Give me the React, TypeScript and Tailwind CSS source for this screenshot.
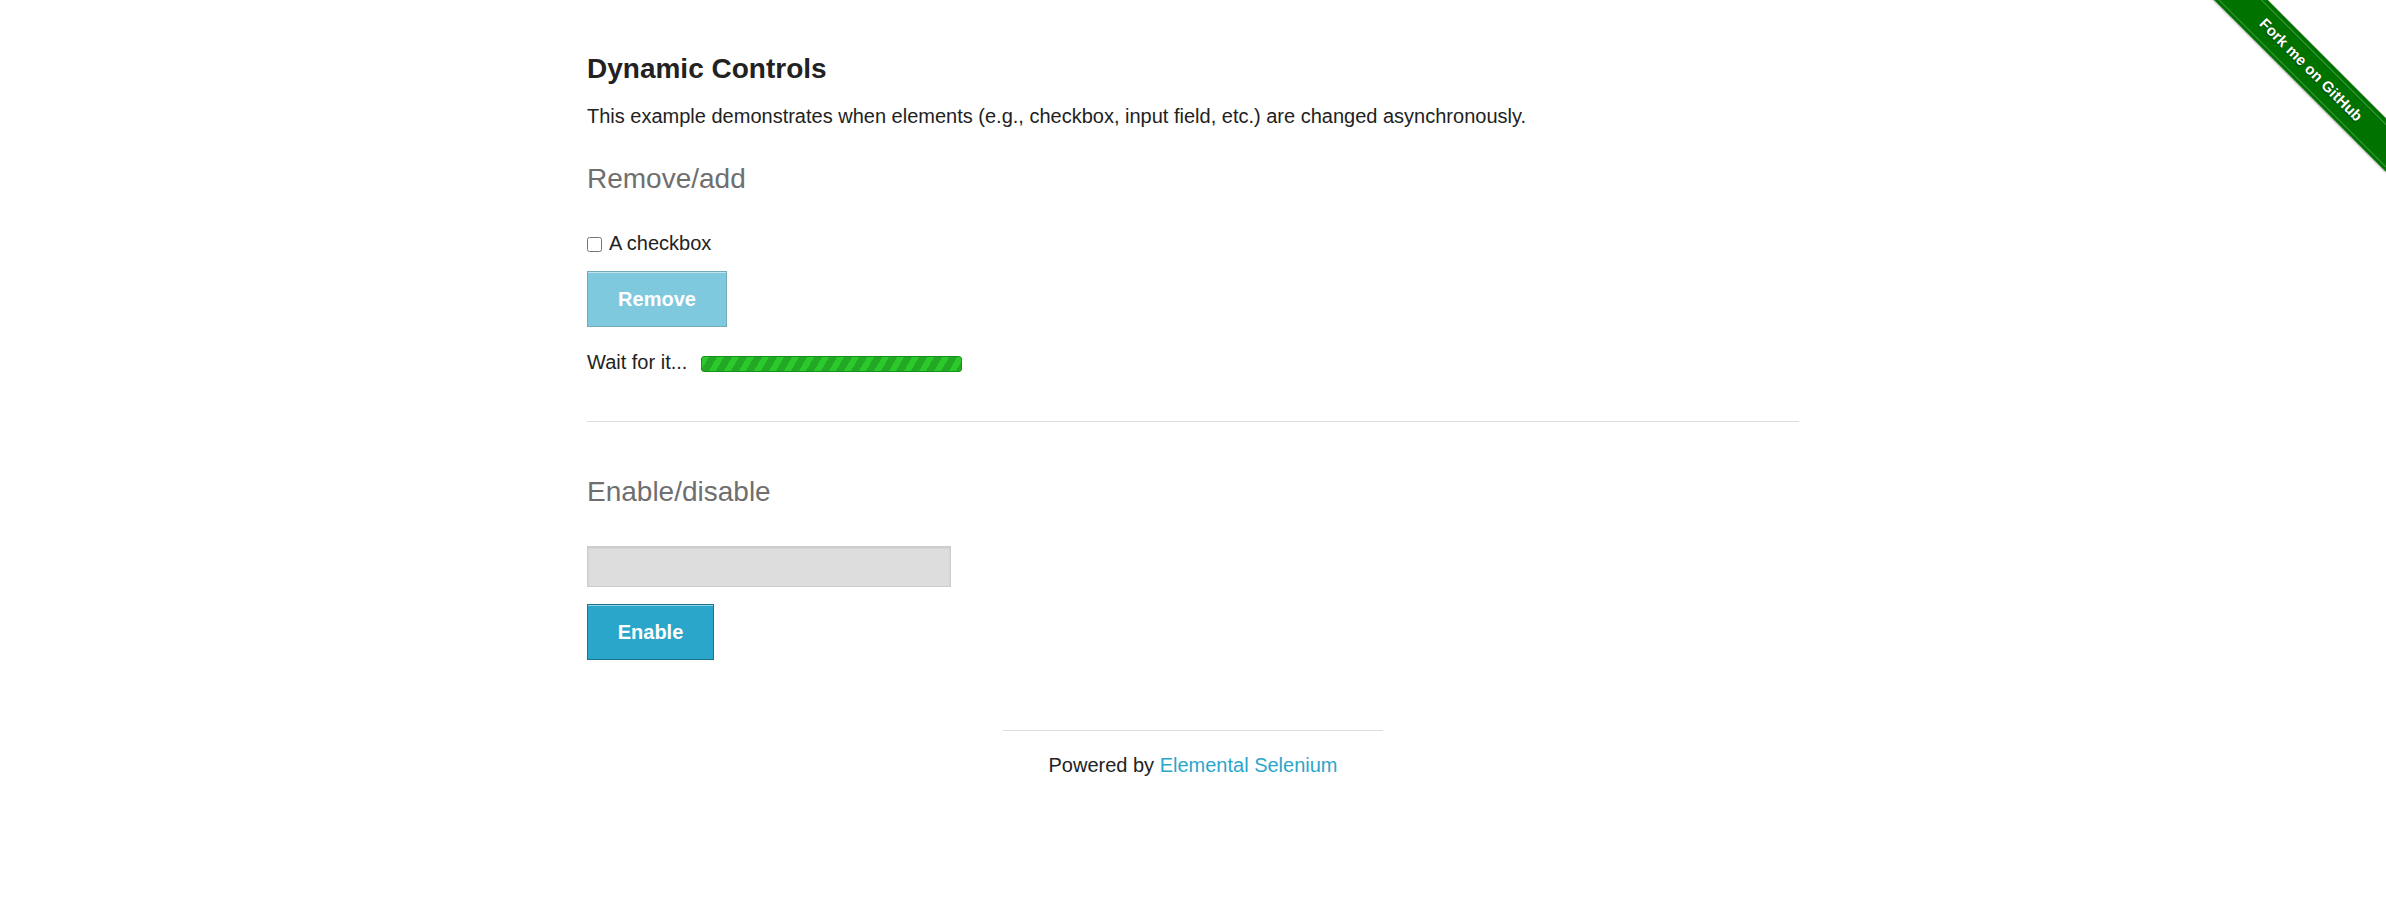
import React from "react";

function ForkRibbon() {
  return (
    <div className="absolute top-0 right-0 w-[176px] h-[176px] overflow-hidden pointer-events-none">
      <div className="absolute left-[-24px] top-[51px] w-[250px] h-[38px] rotate-45 bg-[#007200] shadow-[0_1px_2px_rgba(0,0,0,0.3)] flex items-center justify-center">
        <div className="w-full h-[31px] border-y border-[#3a9a3a] flex items-center justify-center">
          <span className="text-white text-[15px] font-bold tracking-[0.2px] [text-shadow:0_1px_1px_rgba(0,0,0,0.5)]">
            Fork me on GitHub
          </span>
        </div>
      </div>
    </div>
  );
}

export default function App() {
  return (
    <div className="relative min-h-[923px] bg-white font-['Liberation_Sans',Arial,sans-serif] text-[#222222]">
      <ForkRibbon />

      <div className="w-[1212px] mx-auto pt-[52px]">
        <h3 className="text-[28px] leading-[34px] font-bold">Dynamic Controls</h3>
        <p className="mt-[15px] text-[20px] leading-[30px]">
          This example demonstrates when elements (e.g., checkbox, input field, etc.) are changed asynchronously.
        </p>

        {/* Remove/add */}
        <h4 className="mt-[31px] text-[28px] leading-[34px] text-[#6f6f6f]">Remove/add</h4>
        <div className="mt-[32px] flex items-center h-[30px] text-[20px]">
          <input type="checkbox" className="m-0 w-[15px] h-[15px] mr-[7px] translate-y-[1px]" />
          <span>A checkbox</span>
        </div>
        <button
          disabled
          className="mt-[13px] block h-[56px] w-[140px] border border-[#1e728c] bg-[#2ba6cb] text-white text-[20px] leading-[24px] font-bold opacity-60 shadow-[inset_0_1px_0_rgba(255,255,255,0.5)]"
        >
          Remove
        </button>
        <div className="mt-[20px] flex items-start text-[20px] leading-[30px]">
          <span>Wait for it...</span>
          <div className="ml-[14px] mt-[9px] w-[261px] h-[16px] rounded-[3px] border border-[#1b8f1b] bg-[repeating-linear-gradient(120deg,#2cc92c_0px,#2cc92c_6px,#22a822_6px,#22a822_13px)]" />
        </div>

        <hr className="mt-[44px] border-0 border-t border-[#dddddd]" />

        {/* Enable/disable */}
        <h4 className="mt-[53px] text-[28px] leading-[34px] text-[#6f6f6f]">Enable/disable</h4>
        <input
          type="text"
          disabled
          className="mt-[37px] block w-[364px] h-[41px] bg-[#dddddd] border border-[#cccccc] shadow-[inset_0_1px_2px_rgba(0,0,0,0.1)] outline-none"
        />
        <button className="mt-[17px] block h-[56px] w-[127px] border border-[#1e728c] bg-[#2ba6cb] text-white text-[20px] leading-[24px] font-bold shadow-[inset_0_1px_0_rgba(255,255,255,0.5)]">
          Enable
        </button>
      </div>

      {/* Footer */}
      <div className="mt-[70px] flex flex-col items-center">
        <div className="w-[380px] border-t border-[#dddddd]" />
        <div className="mt-[19px] text-[20px] leading-[30px]">
          Powered by <a className="text-[#2ba6cb]" href="#">Elemental Selenium</a>
        </div>
      </div>
    </div>
  );
}
